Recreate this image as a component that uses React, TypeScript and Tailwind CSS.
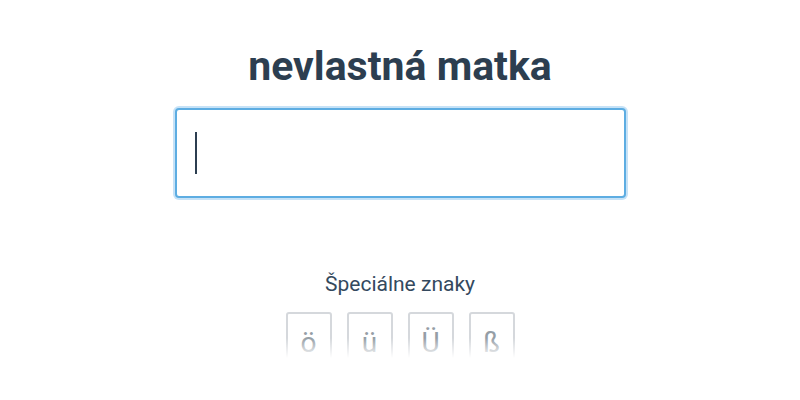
const chars = ["ö", "ü", "Ü", "ß"];

export default function App() {
  return (
    <div className="flex h-[400px] w-[800px] flex-col items-center bg-white pt-[38px] font-['Roboto',sans-serif]">
      <h1 className="text-[41px] font-bold leading-[56px] text-[#2c3e50]">nevlastná matka</h1>

      {/* answer box */}
      <div className="mt-[12px] rounded-[6px] bg-[#c6e2f7] p-[2px]">
        <div className="flex h-[90px] w-[451px] items-center rounded-[4px] border-2 border-[#5dade2] bg-white px-[18px]">
          <span className="block h-[42px] w-[2px] bg-[#2c3e50]" />
        </div>
      </div>

      <div className="mt-[70px] text-[21px] leading-[28px] text-[#34495e]">Špeciálne znaky</div>

      {/* special chars, faded at the bottom */}
      <div className="relative mt-[14px] h-[46px] overflow-hidden">
        <div className="flex gap-[15px]">
          {chars.map((c) => (
            <button
              key={c}
              className="flex h-[60px] w-[46px] items-start justify-center rounded-[3px] border-2 border-[#d5d8dc] pt-[15px] text-[28px] leading-[28px] text-[#959ea6]"
            >
              {c}
            </button>
          ))}
        </div>
        <div className="absolute inset-x-0 bottom-0 h-[20px] bg-gradient-to-b from-white/0 to-white" />
      </div>
    </div>
  );
}
